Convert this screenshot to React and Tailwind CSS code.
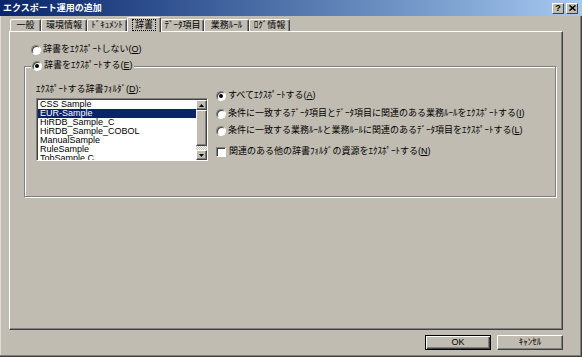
import React from "react";

const FONT = { fontFamily: '"Liberation Sans", "Noto Sans CJK JP", sans-serif' };

function Radio({ checked }) {
  return (
    <span className="w-[10px] h-[10px] shrink-0 rounded-full bg-white border border-t-[#808080] border-l-[#808080] border-r-white border-b-white shadow-[inset_1px_1px_0_#404040] flex items-center justify-center">
      {checked && <span className="w-[4px] h-[4px] rounded-full bg-black" />}
    </span>
  );
}

function Check() {
  return (
    <span className="w-[10px] h-[10px] shrink-0 bg-white border border-t-[#808080] border-l-[#808080] border-r-white border-b-white shadow-[inset_1px_1px_0_#404040]" />
  );
}

function Key({ k }) {
  return (
    <span>
      (<span className="underline">{k}</span>)
    </span>
  );
}

function Tab({ label, width, selected }) {
  if (selected) {
    return (
      <div
        className={`relative z-10 -mb-[1px] h-[15px] ${width} shrink-0 flex items-center justify-center bg-[#c0bcb1] border-t border-l border-white border-r border-r-[#404040] shadow-[inset_-1px_0_0_#808080] rounded-tl-[2px] rounded-tr-[2px]`}
      >
        <span className="px-[2px] leading-[10px] outline outline-1 outline-dotted outline-black">{label}</span>
      </div>
    );
  }
  return (
    <div
      className={`h-[12px] ${width} shrink-0 flex items-center justify-center border-t border-l border-white border-r border-r-[#404040] shadow-[inset_-1px_0_0_#808080] rounded-tl-[2px] rounded-tr-[2px]`}
    >
      {label}
    </div>
  );
}

const items = [
  "CSS Sample",
  "EUR-Sample",
  "HiRDB_Sample_C",
  "HiRDB_Sample_COBOL",
  "ManualSample",
  "RuleSample",
  "TobSample C",
];

function ArrowBtn({ up }) {
  return (
    <div className="h-[10px] w-[11px] bg-[#c0bcb1] border-t border-l border-white border-r border-b border-r-[#404040] border-b-[#404040] shadow-[inset_-1px_-1px_0_#808080] flex items-center justify-center">
      <svg width="5" height="3" viewBox="0 0 5 3">
        {up ? <polygon points="2.5,0 5,3 0,3" fill="#000" /> : <polygon points="0,0 5,0 2.5,3" fill="#000" />}
      </svg>
    </div>
  );
}

export default function App() {
  return (
    <div
      className="w-[582px] h-[357px] bg-[#c0bcb1] flex flex-col overflow-hidden text-[9px] text-black shadow-[inset_-1px_-1px_0_#404040,inset_-2px_-2px_0_#808080,inset_1px_0_0_#e0ddd6]"
      style={FONT}
    >
      {/* title bar */}
      <div className="h-[16px] shrink-0 flex items-center pl-[3px] pr-[4px] bg-linear-to-r from-[#0a246a] to-[#a6caf0]">
        <span className="text-white font-bold text-[9px] leading-none">エクスポート運用の追加</span>
        <div className="ml-auto flex gap-[2px]">
          <div className="w-[12px] h-[11px] bg-[#c0bcb1] border-t border-l border-white border-r border-b border-r-[#404040] border-b-[#404040] flex items-center justify-center font-bold text-[9px] leading-none">
            ?
          </div>
          <div className="w-[12px] h-[11px] bg-[#c0bcb1] border-t border-l border-white border-r border-b border-r-[#404040] border-b-[#404040] flex items-center justify-center">
            <svg width="7" height="6" viewBox="0 0 7 6">
              <path d="M0.5 0.5 L6.5 5.5 M6.5 0.5 L0.5 5.5" stroke="#000" strokeWidth="1.6" />
            </svg>
          </div>
        </div>
      </div>

      {/* tabs */}
      <div className="h-[15px] shrink-0 flex items-end pl-[10px]">
        <Tab label="一般" width="w-[31px]" />
        <Tab label="環境情報" width="w-[46px]" />
        <Tab label="ﾄﾞｷｭﾒﾝﾄ" width="w-[40px]" />
        <Tab label="辞書" width="w-[34px]" selected />
        <Tab label="ﾃﾞｰﾀ項目" width="w-[43px]" />
        <Tab label="業務ﾙｰﾙ" width="w-[45px]" />
        <Tab label="ﾛｸﾞ情報" width="w-[41px]" />
      </div>

      {/* panel */}
      <div className="ml-[9px] w-[554px] h-[299px] shrink-0 border-t border-l border-white border-r border-b border-r-[#404040] border-b-[#404040] shadow-[inset_-1px_-1px_0_#808080] pt-[12px]">
        <div className="pl-[21px] h-[12px] flex items-center gap-[2px]">
          <Radio />
          <span>
            辞書をｴｸｽﾎﾟｰﾄしない<Key k="O" />
          </span>
        </div>

        <fieldset className="mt-[4px] ml-[14px] w-[532px] border border-[#808080] shadow-[inset_1px_1px_0_#fff,1px_1px_0_#fff] pb-[35px]">
          <legend className="ml-[6px] px-[1px] bg-[#c0bcb1] h-[12px] flex items-center gap-[2px]">
            <Radio checked />
            <span>
              辞書をｴｸｽﾎﾟｰﾄする<Key k="E" />
            </span>
          </legend>

          <div className="flex pl-[11px]">
            <div className="flex flex-col">
              <div className="mt-[12px] h-[10px] leading-[10px]">
                ｴｸｽﾎﾟｰﾄする辞書ﾌｫﾙﾀﾞ<Key k="D" />:
              </div>
              <div className="mt-[4px] w-[172px] h-[63px] bg-white border border-t-[#808080] border-l-[#808080] border-r-white border-b-white shadow-[inset_1px_1px_0_#404040] flex pt-[1px] pl-[1px]">
                <div className="flex-1 overflow-hidden">
                  {items.map((it, i) => (
                    <div
                      key={it}
                      className={`h-[9px] leading-[9px] pl-[2px] whitespace-nowrap ${i === 1 ? "bg-[#0a246a] text-white" : ""}`}
                    >
                      {it}
                    </div>
                  ))}
                </div>
                <div className="w-[11px] flex flex-col">
                  <ArrowBtn up />
                  <div className="h-[36px] bg-[#c0bcb1] border-t border-l border-white border-r border-b border-r-[#404040] border-b-[#404040] shadow-[inset_-1px_-1px_0_#808080]" />
                  <div className="flex-1 bg-[repeating-conic-gradient(#ffffff_0%_25%,#c0bcb1_0%_50%)] bg-[length:2px_2px]" />
                  <ArrowBtn />
                </div>
              </div>
            </div>

            <div className="ml-[8px] mt-[18px] flex flex-col">
              <div className="h-[12px] flex items-center gap-[2px]">
                <Radio checked />
                <span>
                  すべてｴｸｽﾎﾟｰﾄする<Key k="A" />
                </span>
              </div>
              <div className="mt-[6px] h-[12px] flex items-center gap-[2px]">
                <Radio />
                <span>
                  条件に一致するﾃﾞｰﾀ項目とﾃﾞｰﾀ項目に関連のある業務ﾙｰﾙをｴｸｽﾎﾟｰﾄする<Key k="I" />
                </span>
              </div>
              <div className="mt-[5px] h-[12px] flex items-center gap-[2px]">
                <Radio />
                <span>
                  条件に一致する業務ﾙｰﾙと業務ﾙｰﾙに関連のあるﾃﾞｰﾀ項目をｴｸｽﾎﾟｰﾄする<Key k="L" />
                </span>
              </div>
              <div className="mt-[9px] h-[12px] flex items-center gap-[3px]">
                <Check />
                <span>
                  関連のある他の辞書ﾌｫﾙﾀﾞの資源をｴｸｽﾎﾟｰﾄする<Key k="N" />
                </span>
              </div>
            </div>
          </div>
        </fieldset>
      </div>

      {/* buttons */}
      <div className="flex justify-end gap-[6px] pr-[19px] pt-[5px]">
        <button className="w-[66px] h-[15px] border border-black bg-[#c0bcb1] shadow-[inset_1px_1px_0_#fff,inset_-1px_-1px_0_#404040,inset_-2px_-2px_0_#808080] flex items-center justify-center leading-none">
          OK
        </button>
        <button className="w-[66px] h-[15px] bg-[#c0bcb1] border-t border-l border-white border-r border-b border-r-[#404040] border-b-[#404040] shadow-[inset_-1px_-1px_0_#808080] flex items-center justify-center leading-none">
          ｷｬﾝｾﾙ
        </button>
      </div>
    </div>
  );
}
